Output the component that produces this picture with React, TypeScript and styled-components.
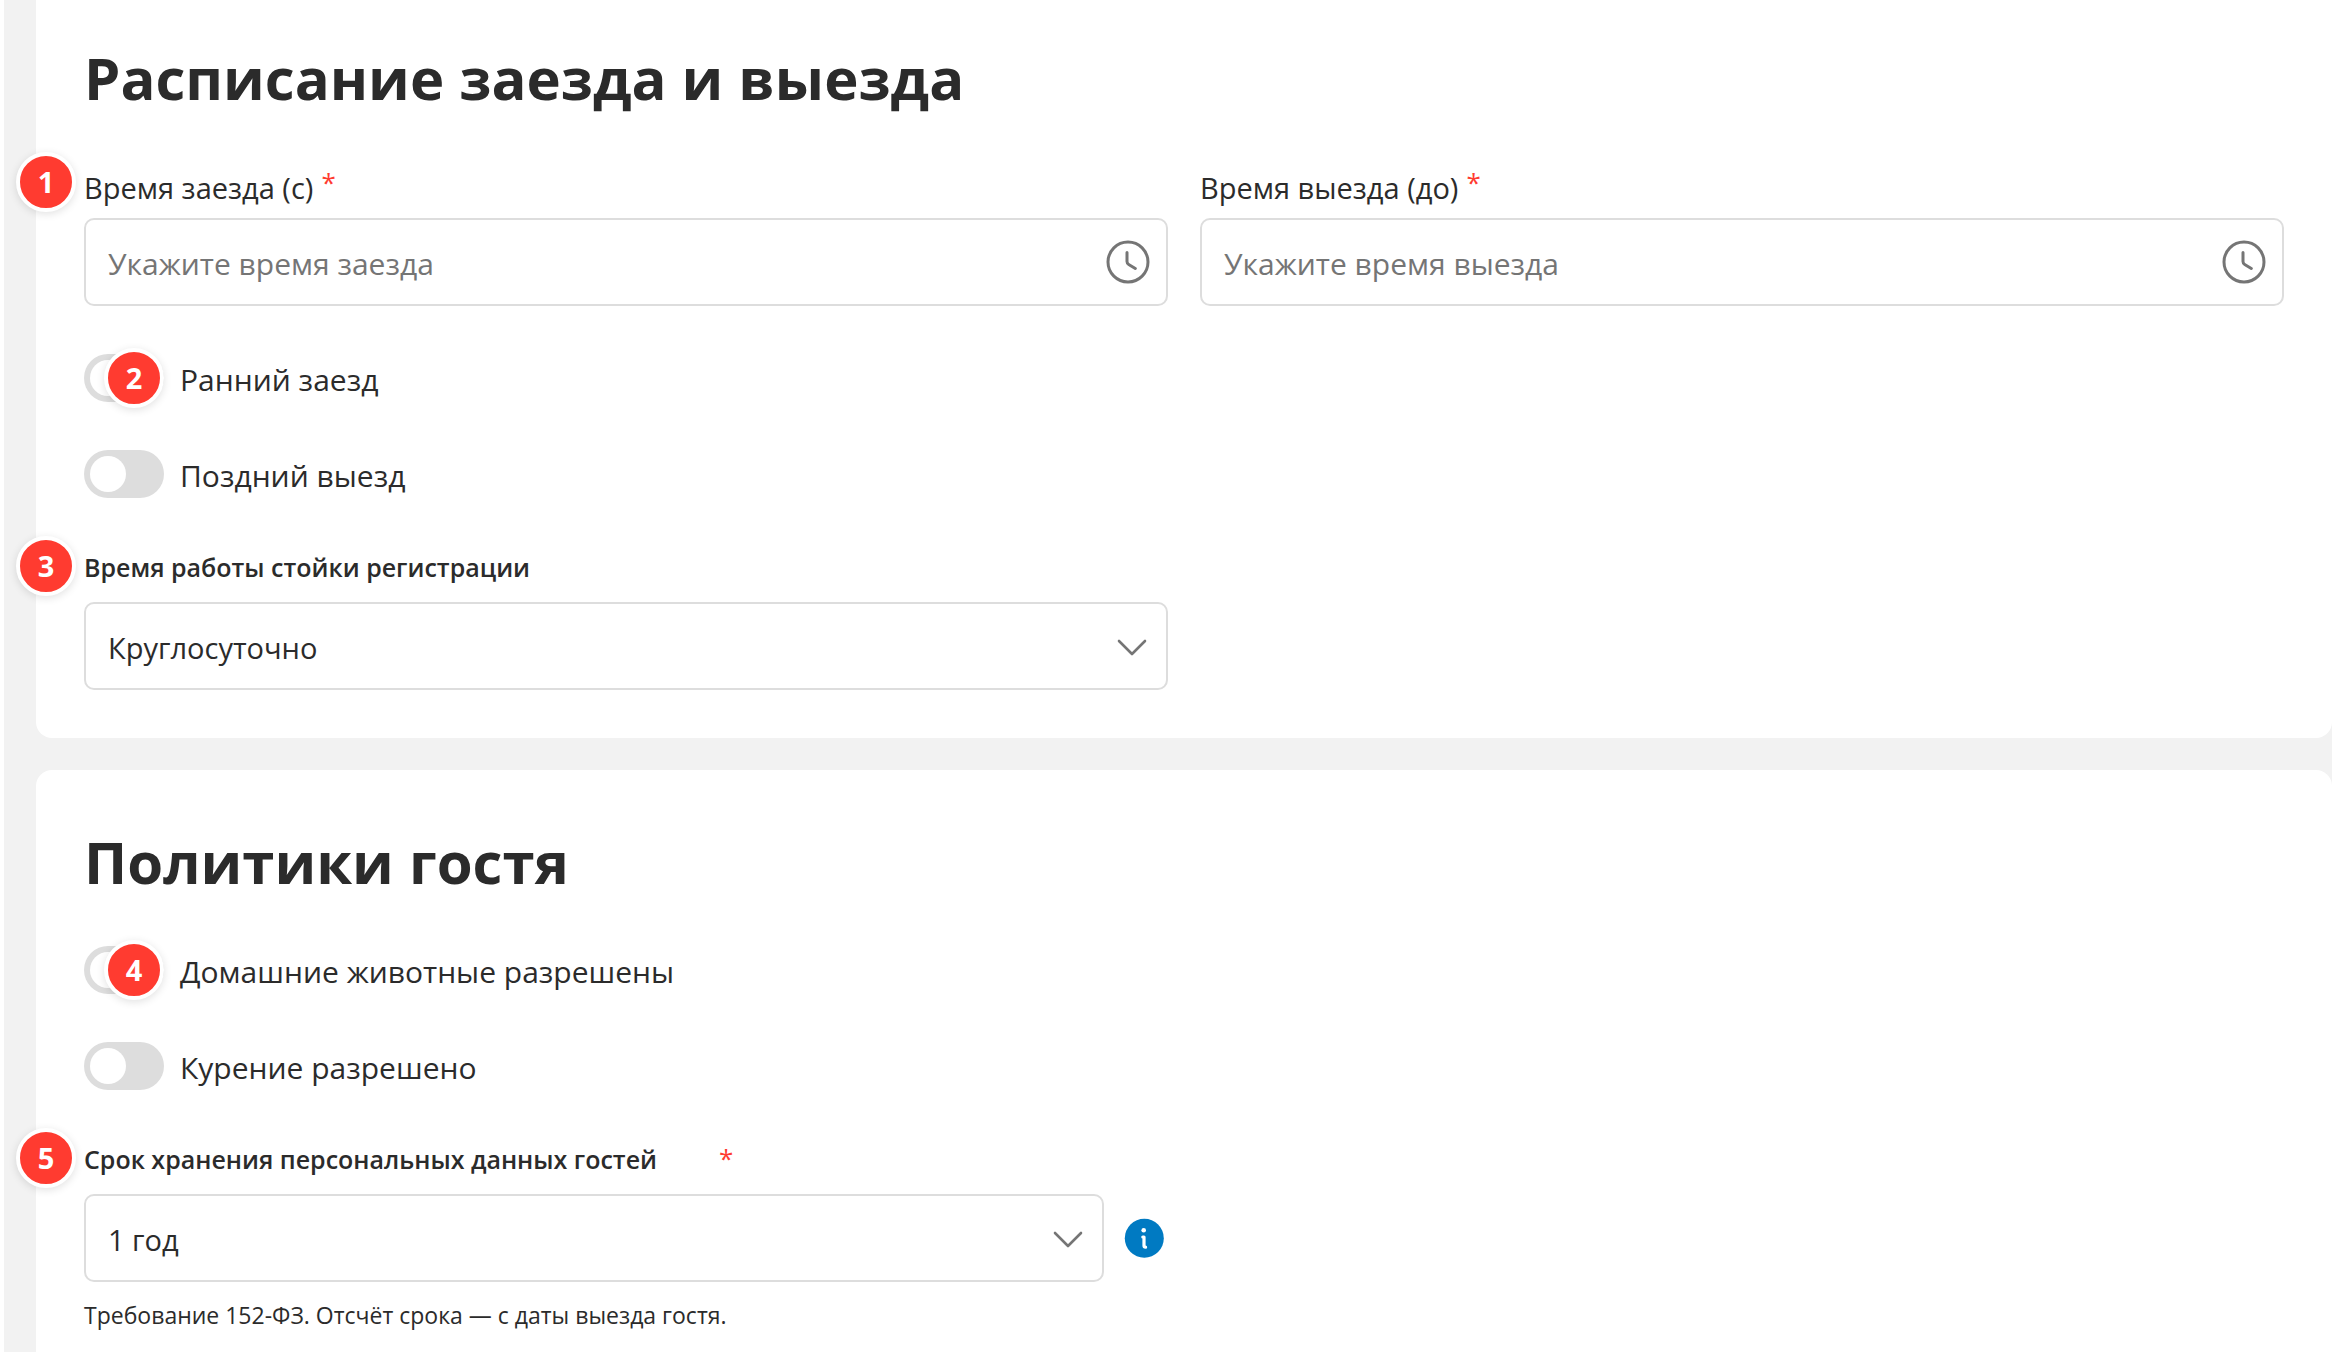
import React, { useId } from 'react';
import styled, { createGlobalStyle } from 'styled-components';

const GlobalStyle = createGlobalStyle`
  *, *::before, *::after { box-sizing: border-box; }
  body {
    margin: 0;
    background: #fff;
    color: #2b2b2b;
    font-family: 'Open Sans', 'Noto Sans', sans-serif;
    font-size: 30px;
  }
  input, select, button { font: inherit; color: inherit; }
`;

const Page = styled.main`
  display: flex;
  flex-direction: column;
  gap: 32px;
  min-height: 100vh;
  margin-left: 4px;
  padding-left: 32px;
  background: #f2f2f2;
`;

const Card = styled.section<{ $first?: boolean }>`
  display: flex;
  flex-direction: column;
  gap: 40px;
  padding: ${(p) => (p.$first ? '34px 48px 48px' : '48px 48px 16px')};
  border-radius: ${(p) => (p.$first ? '0 0 16px 16px' : '16px 16px 0 0')};
  flex-grow: ${(p) => (p.$first ? 0 : 1)};
  background: #fff;
`;

const Title = styled.h2`
  margin: 0;
  font-size: 58px;
  line-height: 88px;
  font-weight: 700;
`;

const Fields = styled.div`
  display: flex;
  flex-direction: column;
  gap: 48px;
`;

const Columns = styled.div`
  display: grid;
  grid-template-columns: 1fr 1fr;
  gap: 32px;
`;

const Field = styled.div`
  position: relative;
  display: flex;
  flex-direction: column;
`;

const Label = styled.label`
  display: flex;
  gap: 8px;
  margin-bottom: 4px;
  font-size: 29px;
  line-height: 52px;
`;

const StrongLabel = styled.label`
  display: flex;
  gap: 62px;
  margin-bottom: 14px;
  font-size: 25px;
  line-height: 42px;
  font-weight: 600;
`;

const Star = styled.span`
  color: #ff3b30;
  font-size: 26px;
  line-height: 40px;
  font-weight: 400;
`;

const Control = styled.div`
  display: flex;
  align-items: center;
  height: 88px;
  padding: 0 14px 0 22px;
  border: 2px solid #ddd;
  border-radius: 10px;
  background: #fff;
`;

const TextInput = styled.input`
  flex: 1;
  min-width: 0;
  height: 100%;
  padding: 2px 0 0;
  border: 0;
  outline: 0;
  background: transparent;
  &::placeholder { color: #757575; opacity: 1; }
`;

const IconButton = styled.button`
  display: flex;
  flex: none;
  padding: 0;
  border: 0;
  background: none;
  cursor: pointer;
`;

const SelectBox = styled.div`
  display: grid;
  flex: 1;
  align-items: center;
  & > * { grid-area: 1 / 1; }
  & > svg { justify-self: end; margin-right: 12px; pointer-events: none; }
`;

const NativeSelect = styled.select`
  appearance: none;
  width: 100%;
  height: 88px;
  padding: 2px 72px 0 22px;
  border: 2px solid #ddd;
  border-radius: 10px;
  background: #fff;
  font-size: 29px;
`;

const SelectRow = styled.div`
  display: flex;
  align-items: center;
  gap: 16px;
`;

const ToggleRow = styled.label`
  position: relative;
  display: flex;
  align-items: center;
  gap: 16px;
  height: 48px;
`;

const ToggleText = styled.span`
  padding-top: 2px;
`;

const Switch = styled.input`
  appearance: none;
  display: flex;
  align-items: center;
  flex: none;
  width: 80px;
  height: 48px;
  margin: 0;
  padding: 6px;
  border-radius: 24px;
  background: #ddd;
  &::before {
    content: '';
    width: 36px;
    height: 36px;
    border-radius: 50%;
    background: #fff;
  }
  &:checked { justify-content: flex-end; background: #007ac2; }
`;

const Badge = styled.span<{ $over?: boolean }>`
  position: absolute;
  top: ${(p) => (p.$over ? '-6px' : '-10px')};
  left: ${(p) => (p.$over ? '20px' : '-68px')};
  display: flex;
  align-items: center;
  justify-content: center;
  width: 60px;
  height: 60px;
  border: 4px solid #fff;
  border-radius: 50%;
  background: #ff3b30;
  box-shadow: 0 2px 8px rgba(0, 0, 0, 0.12);
  color: #fff;
  font-size: 29px;
  line-height: 40px;
  font-weight: 700;
`;

const Hint = styled.p`
  margin: 16px 0 0;
  font-size: 23px;
  line-height: 34px;
`;

const ClockIcon = () => (
  <svg width="48" height="48" viewBox="0 0 48 48" fill="none" stroke="#757575" strokeWidth="3" strokeLinecap="round" strokeLinejoin="round" aria-hidden="true">
    <circle cx="24" cy="24" r="20" />
    <path d="M23 14.5V23.5Q23 25.5 24.7 26.5L31.3 30.5" />
  </svg>
);

const ChevronIcon = () => (
  <svg width="48" height="48" viewBox="0 0 48 48" fill="none" stroke="#757575" strokeWidth="2.6" strokeLinecap="round" strokeLinejoin="round" aria-hidden="true">
    <path d="M11 19L24 32L37 19" />
  </svg>
);

const InfoIcon = () => (
  <svg width="48" height="48" viewBox="0 0 48 48" fill="none" aria-hidden="true">
    <circle cx="24.3" cy="24.3" r="19.5" fill="#007ac2" />
    <circle cx="23.7" cy="16.2" r="2.3" fill="#fff" />
    <path d="M22.8 23H24V31.5Q24 33.2 25.6 33.2" stroke="#fff" strokeWidth="3.2" strokeLinecap="round" strokeLinejoin="round" />
  </svg>
);

type TimeFieldProps = { label: string; placeholder: string; badge?: number };

function TimeField({ label, placeholder, badge }: TimeFieldProps) {
  const id = useId();
  return (
    <Field>
      {badge && <Badge>{badge}</Badge>}
      <Label htmlFor={id}>
        {label}
        <Star>*</Star>
      </Label>
      <Control>
        <TextInput id={id} type="text" placeholder={placeholder} required />
        <IconButton type="button" aria-label={placeholder}>
          <ClockIcon />
        </IconButton>
      </Control>
    </Field>
  );
}

type SelectFieldProps = {
  label: string;
  value: string;
  badge: number;
  required?: boolean;
  info?: boolean;
  hint?: string;
};

function SelectField({ label, value, badge, required, info, hint }: SelectFieldProps) {
  const id = useId();
  return (
    <Field>
      <Badge>{badge}</Badge>
      <StrongLabel htmlFor={id}>
        {label}
        {required && <Star>*</Star>}
      </StrongLabel>
      <SelectRow>
        <SelectBox>
          <NativeSelect id={id} defaultValue={value} required={required}>
            <option>{value}</option>
          </NativeSelect>
          <ChevronIcon />
        </SelectBox>
        {info && (
          <IconButton type="button" aria-label={label}>
            <InfoIcon />
          </IconButton>
        )}
      </SelectRow>
      {hint && <Hint>{hint}</Hint>}
    </Field>
  );
}

function Toggle({ label, badge }: { label: string; badge?: number }) {
  return (
    <ToggleRow>
      <Switch type="checkbox" role="switch" />
      <ToggleText>{label}</ToggleText>
      {badge && <Badge $over>{badge}</Badge>}
    </ToggleRow>
  );
}

export default function App() {
  return (
    <>
      <GlobalStyle />
      <Page>
        <Card $first>
          <Title>Расписание заезда и выезда</Title>
          <Fields>
            <Columns>
              <TimeField badge={1} label="Время заезда (с)" placeholder="Укажите время заезда" />
              <TimeField label="Время выезда (до)" placeholder="Укажите время выезда" />
            </Columns>
            <Toggle badge={2} label="Ранний заезд" />
            <Toggle label="Поздний выезд" />
            <Columns>
              <SelectField badge={3} label="Время работы стойки регистрации" value="Круглосуточно" />
            </Columns>
          </Fields>
        </Card>
        <Card>
          <Title>Политики гостя</Title>
          <Fields>
            <Toggle badge={4} label="Домашние животные разрешены" />
            <Toggle label="Курение разрешено" />
            <Columns>
              <SelectField
                badge={5}
                label="Срок хранения персональных данных гостей"
                value="1 год"
                required
                info
                hint="Требование 152-ФЗ. Отсчёт срока — с даты выезда гостя."
              />
            </Columns>
          </Fields>
        </Card>
      </Page>
    </>
  );
}
